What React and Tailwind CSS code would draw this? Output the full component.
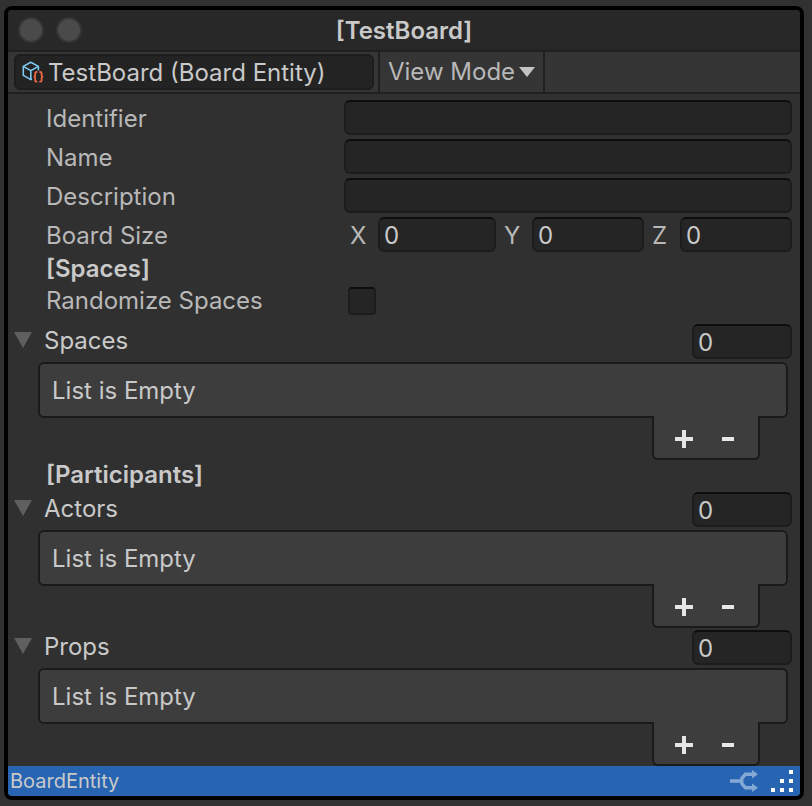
import { useId } from "react";

const FIELD =
  "h-[35px] w-full min-w-0 rounded-[6px] border-2 border-[#1c1c1c] border-t-[#0d0d0d] bg-[#252525] px-1 pt-0.5 text-2xl text-[#c9c9c9] outline-none";

function EntityIcon() {
  return (
    <svg width="22" height="22" viewBox="0 0 22 22" fill="none" aria-hidden="true" className="shrink-0">
      <g stroke="#7fc9f0" strokeWidth="1.6" strokeLinejoin="round">
        <path d="M10 18 8.8 18.6 1.3 14.4V5.4L8.8 1.2 16.4 5.4V9.5" />
        <path d="M1.3 5.4 8.8 9.6 16.4 5.4M8.8 9.6V18.6" />
      </g>
      <g stroke="#ee6743" strokeWidth="1.8">
        <path d="M15.4 11h-.7q-1.5 0-1.5 1.3v2.2q0 1.3-1.5 1.3 1.5 0 1.5 1.3v2.3q0 1.3 1.5 1.3h.7" />
        <path d="M17.4 11h.7q1.5 0 1.5 1.3v2.2q0 1.3 1.5 1.3-1.5 0-1.5 1.3v2.3q0 1.3-1.5 1.3h-.7" />
      </g>
    </svg>
  );
}

function TextRow({ label }) {
  const id = useId();
  return (
    <div className="flex items-center pl-[38px] pr-2">
      <label htmlFor={id} className="w-[298px] shrink-0 pt-0.5">
        {label}
      </label>
      <input id={id} type="text" className={FIELD} />
    </div>
  );
}

function AxisField({ axis, first }) {
  const id = useId();
  return (
    <div className="flex items-center">
      <label htmlFor={id} className={first ? "w-[34px] shrink-0 pl-1.5 pt-0.5" : "w-9 shrink-0 pl-2 pt-0.5"}>
        {axis}
      </label>
      <input id={id} type="text" defaultValue="0" className={FIELD} />
    </div>
  );
}

function ListSection({ label }) {
  const id = useId();
  return (
    <section>
      <div className="flex items-center pl-1.5 pr-2">
        <button type="button" aria-label={`Toggle ${label}`} className="w-[30px] shrink-0 pb-1">
          <svg width="18" height="16" viewBox="0 0 18 16" aria-hidden="true">
            <path d="M0 0H18L9 16Z" fill="#5f5f5f" />
          </svg>
        </button>
        <label htmlFor={id} className="flex-1 pb-0.5 text-[#c9c9c9]">
          {label}
        </label>
        <div className="w-[100px]">
          <input id={id} type="text" defaultValue="0" className={FIELD} />
        </div>
      </div>
      <div className="ml-[30px] mr-3 mt-[3px]">
        <div className="flex h-14 items-center rounded-[6px] border-2 border-[#1a1a1a] bg-[#3d3d3d] px-3 pt-0.5 text-[#c9c9c9]">
          List is Empty
        </div>
        <div className="-mt-0.5 ml-auto mr-7 flex h-11 w-[108px] justify-center gap-2 rounded-b-[6px] border-2 border-t-0 border-[#1a1a1a] bg-[#3d3d3d] pt-1">
          <button type="button" aria-label={`Add to ${label}`} className="flex w-9 items-center justify-center">
            <svg width="18" height="18" viewBox="0 0 18 18" aria-hidden="true">
              <path d="M0 9H18M9 0V18" stroke="#e6e6e6" strokeWidth="4" />
            </svg>
          </button>
          <button type="button" aria-label={`Remove from ${label}`} className="flex w-9 items-center justify-center">
            <svg width="12" height="18" viewBox="0 0 12 18" aria-hidden="true">
              <path d="M0 9H12" stroke="#e6e6e6" strokeWidth="4" />
            </svg>
          </button>
        </div>
      </div>
    </section>
  );
}

export default function App() {
  return (
    <div className="min-h-screen bg-[#313131] px-1 pb-1.5 pr-2 pt-1.5 font-['Inter','Liberation_Sans',sans-serif] text-2xl/[30px] text-[#b8b8b8] [font-optical-sizing:none]">
      <main className="overflow-hidden rounded-lg border-4 border-black bg-[#303030]">
        <header className="grid h-[42px] grid-cols-[1fr_auto_1fr] items-center border-b-2 border-[#202020] bg-[#282828] px-2.5">
          <div className="flex gap-3">
            <button type="button" aria-label="Close" className="size-[26px] rounded-full border-2 border-[#353535] bg-[#4a4a4a]" />
            <button type="button" aria-label="Minimize" className="size-[26px] rounded-full border-2 border-[#353535] bg-[#4a4a4a]" />
          </div>
          <h1 className="pt-0.5 font-semibold text-[#c9c9c9]">[TestBoard]</h1>
        </header>

        <div className="flex h-[42px] border-b-2 border-[#202020] bg-[#353535] pl-1.5">
          <button
            type="button"
            className="mr-1 mt-0.5 flex h-9 w-[360px] items-center gap-1 rounded-[6px] border-2 border-[#1d1d1d] bg-[#232323] px-1.5 text-[#c9c9c9]"
          >
            <EntityIcon />
            <span className="pt-0.5">TestBoard (Board Entity)</span>
          </button>
          <button type="button" className="flex w-[167px] items-center gap-1 border-x-2 border-[#202020] pl-2">
            View Mode
            <svg width="16" height="10" viewBox="0 0 16 10" aria-hidden="true">
              <path d="M0 0H16L8 10Z" fill="#c4c4c4" />
            </svg>
          </button>
        </div>

        <div className="flex flex-col gap-1 pt-1.5">
          <TextRow label="Identifier" />
          <TextRow label="Name" />
          <TextRow label="Description" />
          <div className="flex items-center pl-[38px] pr-2">
            <span className="w-[298px] shrink-0 pt-0.5">Board Size</span>
            <div className="grid flex-1 grid-cols-[152fr_148fr_148fr]">
              <AxisField axis="X" first />
              <AxisField axis="Y" />
              <AxisField axis="Z" />
            </div>
          </div>
        </div>

        <h2 className="pl-[38px] font-semibold leading-[34px] text-[#c9c9c9]">[Spaces]</h2>
        <div className="mb-2 flex items-center pl-[38px]">
          <label htmlFor="randomize" className="w-[302px] shrink-0">
            Randomize Spaces
          </label>
          <input
            id="randomize"
            type="checkbox"
            className="size-7 appearance-none rounded-[4px] border-2 border-[#1c1c1c] border-t-[#0d0d0d] bg-[#252525]"
          />
        </div>
        <ListSection label="Spaces" />

        <h2 className="pl-[38px] font-semibold text-[#c9c9c9]">[Participants]</h2>
        <div className="flex flex-col gap-0.5 pt-0.5">
          <ListSection label="Actors" />
          <ListSection label="Props" />
        </div>

        <footer className="flex h-[30px] items-center bg-[#2765b3] pl-0.5 pr-[7px] text-xl text-[#c9c9c9]">
          <span className="flex-1">BoardEntity</span>
          <svg width="28" height="22" viewBox="0 0 28 22" fill="none" aria-hidden="true" className="mr-[13px]">
            <path d="M0 11H10.5M23 4.2H15.5L11.8 8.5V13.5L15.5 17.8H23" stroke="#84a9d5" strokeWidth="3.4" />
            <path d="M22 0 28 4.2 22 8.5ZM22 13.5 28 17.8 22 22Z" fill="#84a9d5" />
          </svg>
          <svg width="22" height="22" viewBox="0 0 22 22" fill="#ffffff" aria-hidden="true">
            <path d="M18 0h4v4h-4zM9 9h4v4H9zM18 9h4v4h-4zM0 18h4v4H0zM9 18h4v4H9zM18 18h4v4h-4z" />
          </svg>
        </footer>
      </main>
    </div>
  );
}
